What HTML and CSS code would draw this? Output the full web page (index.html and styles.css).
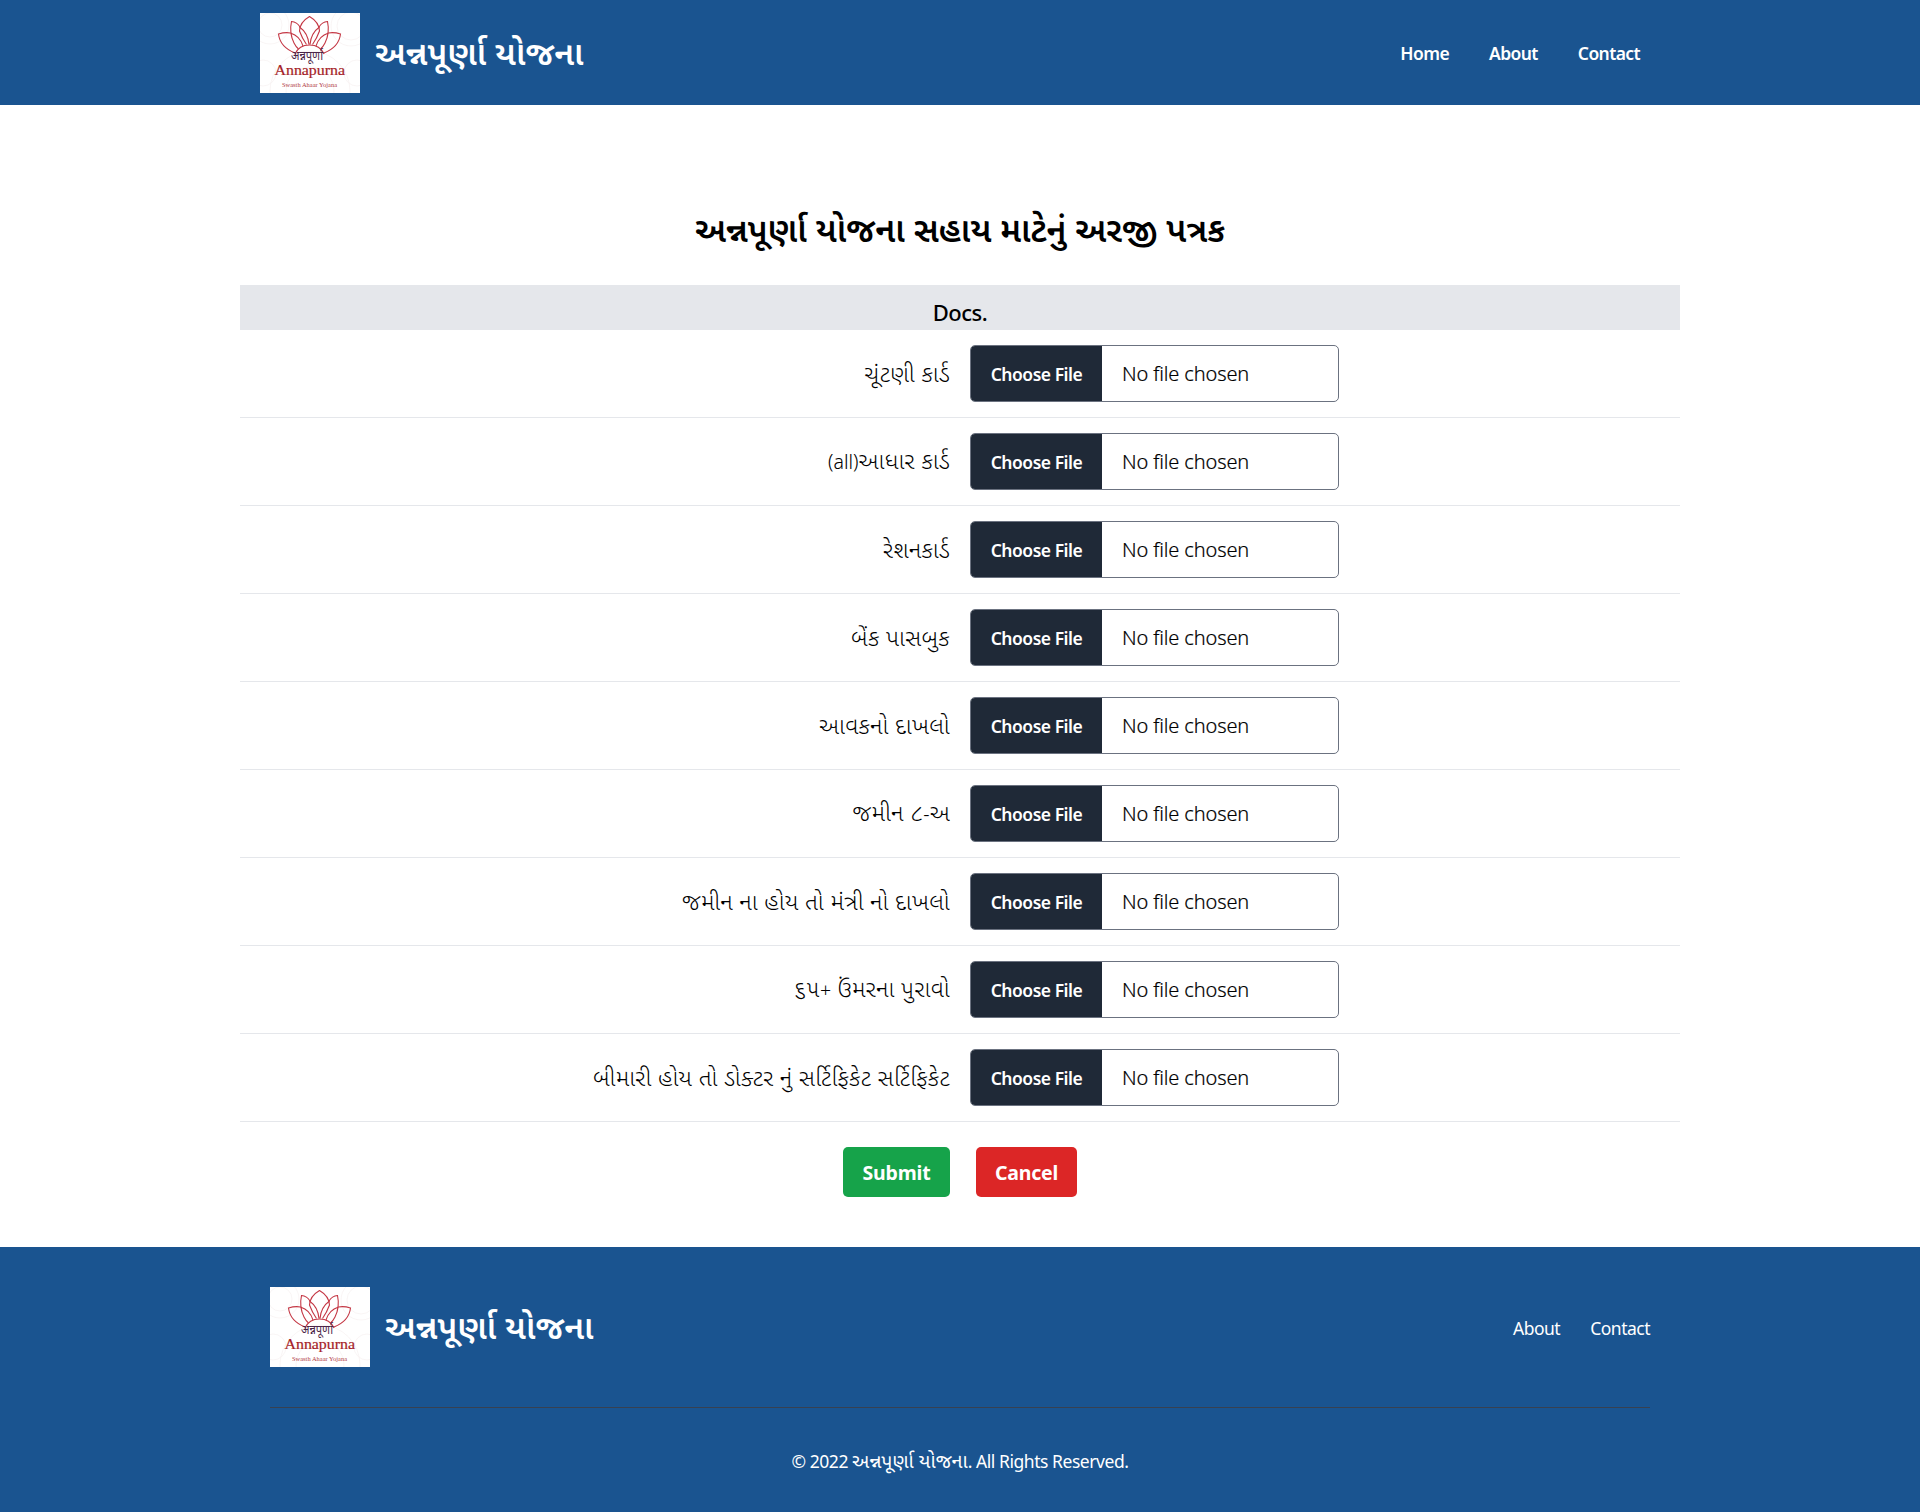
FILE: index.html
```html
<!DOCTYPE html>
<html lang="gu">
<head>
<meta charset="utf-8">
<title>અન્નપૂર્ણા યોજના</title>
<link rel="stylesheet" href="styles.css">
</head>
<body>
<header class="header">
  <div class="header-inner">
    <a class="brand">
      <svg class="logo" viewBox="0 0 100 80">
        <rect width="100" height="80" fill="#fff"/>
        <g fill="none" stroke="#f7f1f1" stroke-width=".7">
          <circle cx="10" cy="12" r="12"/><circle cx="10" cy="12" r="19"/><circle cx="91" cy="13" r="14"/><circle cx="91" cy="13" r="20"/><circle cx="50" cy="78" r="24"/><circle cx="50" cy="78" r="40"/><circle cx="3" cy="60" r="13"/><circle cx="97" cy="60" r="13"/>
        </g>
        <g fill="none" stroke="#c43744" stroke-width="1.1">
          <path d="M49.500 3.500Q40 9 39.500 18Q42 25 46.500 31.500M49.500 3.500Q59 9 59.500 18Q57 25 52.500 31.500"/>
          <path d="M40 14Q37 9 31.500 8.500Q29 20 34 30Q36 34 38.500 36M59 14Q62 9 67.500 8.500Q70 20 65 30Q63 34 60.500 36"/>
          <path d="M30.500 20Q25 19 18.500 21Q20 34 35 40M68.500 20Q74 19 80.500 21Q79 34 64 40"/>
          <path d="M30.500 20Q40 23 43 33M68.500 20Q59 23 56 33M39.500 14Q48 20 49 31.500M59.500 14Q51 20 50 31.500"/>
          <path d="M35 41Q39 32 49.500 32Q60 32 64 41"/>
        </g>
        <text x="31" y="47" textLength="32" lengthAdjust="spacingAndGlyphs" class="logo-hindi">अन्नपूर्णा</text>
        <text x="14.500" y="62" textLength="70.500" lengthAdjust="spacingAndGlyphs" class="logo-name">Annapurna</text>
        <text x="22" y="73.500" textLength="55" lengthAdjust="spacingAndGlyphs" class="logo-tag">Swasth Ahaar Yojana</text>
      </svg>
      <span class="brand-name">અન્નપૂર્ણા યોજના</span>
    </a>
    <nav class="nav"><a>Home</a><a>About</a><a>Contact</a></nav>
  </div>
</header>

<main class="main">
  <h1 class="title">અન્નપૂર્ણા યોજના સહાય માટેનું અરજી પત્રક</h1>
  <div class="section">Docs.</div>
  <div class="row"><label class="label">ચૂંટણી કાર્ડ</label><div class="file"><span class="choose">Choose File</span><span class="none">No file chosen</span></div></div>
  <div class="row"><label class="label"><span class="latin">(all)</span>આધાર કાર્ડ</label><div class="file"><span class="choose">Choose File</span><span class="none">No file chosen</span></div></div>
  <div class="row"><label class="label">રેશનકાર્ડ</label><div class="file"><span class="choose">Choose File</span><span class="none">No file chosen</span></div></div>
  <div class="row"><label class="label">બેંક પાસબુક</label><div class="file"><span class="choose">Choose File</span><span class="none">No file chosen</span></div></div>
  <div class="row"><label class="label">આવકનો દાખલો</label><div class="file"><span class="choose">Choose File</span><span class="none">No file chosen</span></div></div>
  <div class="row"><label class="label">જમીન ૮<span class="latin">-</span>અ</label><div class="file"><span class="choose">Choose File</span><span class="none">No file chosen</span></div></div>
  <div class="row"><label class="label">જમીન ના હોય તો મંત્રી નો દાખલો</label><div class="file"><span class="choose">Choose File</span><span class="none">No file chosen</span></div></div>
  <div class="row"><label class="label">૬૫<span class="latin">+</span> ઉંમરના પુરાવો</label><div class="file"><span class="choose">Choose File</span><span class="none">No file chosen</span></div></div>
  <div class="row"><label class="label">બીમારી હોય તો ડોક્ટર નું સર્ટિફિકેટ સર્ટિફિકેટ</label><div class="file"><span class="choose">Choose File</span><span class="none">No file chosen</span></div></div>
  <div class="actions"><button class="btn submit">Submit</button><button class="btn cancel">Cancel</button></div>
</main>

<footer class="footer">
  <div class="footer-inner">
    <div class="footer-top">
      <a class="brand">
        <svg class="logo" viewBox="0 0 100 80">
          <rect width="100" height="80" fill="#fff"/>
          <g fill="none" stroke="#f7f1f1" stroke-width=".7">
            <circle cx="10" cy="12" r="12"/><circle cx="10" cy="12" r="19"/><circle cx="91" cy="13" r="14"/><circle cx="91" cy="13" r="20"/><circle cx="50" cy="78" r="24"/><circle cx="50" cy="78" r="40"/><circle cx="3" cy="60" r="13"/><circle cx="97" cy="60" r="13"/>
          </g>
          <g fill="none" stroke="#c43744" stroke-width="1.1">
            <path d="M49.500 3.500Q40 9 39.500 18Q42 25 46.500 31.500M49.500 3.500Q59 9 59.500 18Q57 25 52.500 31.500"/>
            <path d="M40 14Q37 9 31.500 8.500Q29 20 34 30Q36 34 38.500 36M59 14Q62 9 67.500 8.500Q70 20 65 30Q63 34 60.500 36"/>
            <path d="M30.500 20Q25 19 18.500 21Q20 34 35 40M68.500 20Q74 19 80.500 21Q79 34 64 40"/>
            <path d="M30.500 20Q40 23 43 33M68.500 20Q59 23 56 33M39.500 14Q48 20 49 31.500M59.500 14Q51 20 50 31.500"/>
            <path d="M35 41Q39 32 49.500 32Q60 32 64 41"/>
          </g>
          <text x="31" y="47" textLength="32" lengthAdjust="spacingAndGlyphs" class="logo-hindi">अन्नपूर्णा</text>
          <text x="14.500" y="62" textLength="70.500" lengthAdjust="spacingAndGlyphs" class="logo-name">Annapurna</text>
          <text x="22" y="73.500" textLength="55" lengthAdjust="spacingAndGlyphs" class="logo-tag">Swasth Ahaar Yojana</text>
        </svg>
        <span class="brand-name">અન્નપૂર્ણા યોજના</span>
      </a>
      <nav class="footer-nav"><a>About</a><a>Contact</a></nav>
    </div>
    <p class="copy">© 2022 <span class="copy-name">અન્નપૂર્ણા યોજના</span>. All Rights Reserved.</p>
  </div>
</footer>
</body>
</html>
```
FILE: styles.css
```css
* { box-sizing: border-box; }
body { margin: 0; background: #fff; color: #000; font-family: "Segoe UI", "Noto Sans", "Noto Sans Gujarati", "Nirmala UI", sans-serif; font-size: 20px; }
.header { height: 105px; background: #1a5490; color: #fff; }
.header-inner { width: 1440px; height: 105px; margin: 0 auto; padding: 0 40px 0 20px; display: flex; justify-content: space-between; align-items: center; }
.brand { display: flex; align-items: center; gap: 15px; }
.logo { display: block; width: 100px; height: 80px; }
.logo-hindi { font: 12px "Noto Sans", sans-serif; fill: #4a2548; }
.logo-name { font: 14.5px "Liberation Serif", serif; fill: #a51d28; stroke: #a51d28; stroke-width: .2px; }
.logo-tag { font: 6.5px "Liberation Serif", serif; fill: #b03a42; }
.brand-name { padding-bottom: 2px; font-size: 33.6px; font-weight: 600; line-height: 40px; white-space: nowrap; }
.nav { display: flex; gap: 40px; font-size: 17.5px; font-weight: 600; letter-spacing: -.6px; }
.main { width: 1440px; height: 1142px; margin: 0 auto; padding-top: 104px; }
.title { margin: 0; height: 76px; line-height: 40px; font-size: 33.8px; font-weight: 600; text-align: center; }
.section { height: 45px; padding-top: 11px; line-height: 32px; background: #e5e7eb; text-align: center; font-size: 22px; font-weight: 500; letter-spacing: -.5px; }
.row { height: 88px; padding: 15px 0; border-bottom: 1px solid #e5e7eb; display: grid; grid-template-columns: 710px 369px; column-gap: 20px; align-items: center; }
.label { padding-bottom: 2px; text-align: right; white-space: nowrap; line-height: 30px; font-size: 23.3px; font-weight: 300; letter-spacing: .35px; }
.latin { font-size: 19.5px; letter-spacing: 0; }
.file { display: flex; height: 57px; border: 1px solid #6b7280; border-radius: 5px; overflow: hidden; align-items: stretch; line-height: 56px; }
.choose { width: 131px; background: #1f2937; color: #fff; font-size: 17.5px; font-weight: 600; text-align: center; letter-spacing: -.48px; }
.none { padding-left: 20px; font-size: 20px; font-weight: 300; letter-spacing: -.13px; -webkit-text-stroke: .2px #000; }
.actions { display: flex; justify-content: center; gap: 26px; padding-top: 25px; }
.btn { height: 50px; border: 0; border-radius: 5px; padding: 0; color: #fff; font-family: inherit; font-size: 19.5px; font-weight: 700; letter-spacing: -.2px; }
.submit { width: 107px; background: #16a34a; }
.cancel { width: 101px; background: #dc2626; }
.footer { height: 265px; background: #1a5490; color: #fff; }
.footer-inner { width: 1380px; margin: 0 auto; padding-top: 40px; }
.footer-top { height: 121px; padding-bottom: 40px; border-bottom: 1px solid #374151; display: flex; align-items: center; justify-content: space-between; }
.footer-nav { display: flex; gap: 30px; padding-top: 2px; font-size: 17.5px; letter-spacing: -.5px; }
.copy { margin: 39px 0 0; text-align: center; font-size: 17.5px; line-height: 28px; letter-spacing: -.45px; }
.copy-name { font-size: 19.6px; letter-spacing: 0; }
```
